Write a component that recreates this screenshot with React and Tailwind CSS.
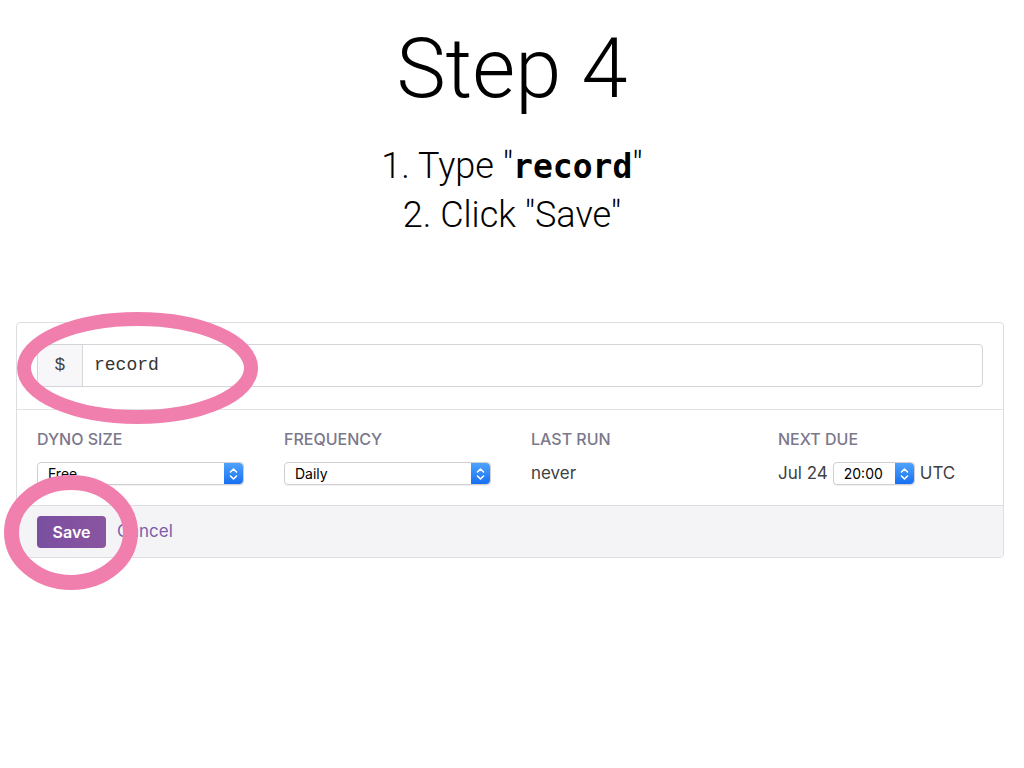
import React from 'react';

const Stepper = () => (
    <div className="h-full w-[19px] rounded-r-[4px] bg-gradient-to-b from-[#4fa3fc] to-[#1670f0] flex items-center justify-center">
        <svg width="9" height="14" viewBox="0 0 9 14" fill="none" stroke="white" strokeWidth="1.6" strokeLinecap="round" strokeLinejoin="round">
            <path d="M1.5 5 L4.5 2 L7.5 5" />
            <path d="M1.5 9 L4.5 12 L7.5 9" />
        </svg>
    </div>
);

const Select = ({ value, width }) => (
    <div className={`${width} h-[23px] flex items-stretch bg-white border border-[#cfcfd3] rounded-[4px] shadow-[0_1px_1px_rgba(0,0,0,0.06)]`}>
        <span className="flex-1 pl-[10px] text-[14px] leading-[21px] text-black">{value}</span>
        <Stepper />
    </div>
);

const Label = ({ children }) => (
    <div className="text-[16px] leading-[18px] font-medium text-[#7b788c]">{children}</div>
);

const App = () => {
    return (
        <div className="relative w-[1024px] h-[768px] bg-white overflow-hidden" style={{ fontFamily: "'Helvetica Neue', Roboto, 'Liberation Sans', sans-serif" }}>
            <h1 className="text-center text-[83px] leading-none font-light text-black pt-[27px]" style={{ fontFamily: "Roboto, 'Liberation Sans', sans-serif" }}>
                Step 4
            </h1>

            <div className="mt-[32px] text-center text-[36px] leading-[48px] font-light text-black" style={{ fontFamily: "Roboto, 'Liberation Sans', sans-serif" }}>
                <div>
                    1. Type "<span className="font-semibold text-[33px]" style={{ fontFamily: "'DejaVu Sans Mono', monospace" }}>record</span>"
                </div>
                <div>2. Click "Save"</div>
            </div>

            <div className="ml-[16px] w-[988px] mt-[83px] border border-[#dedee2] rounded-[4px]" style={{ fontFamily: "Inter, 'Liberation Sans', sans-serif" }}>
                <div className="px-[20px] pt-[21px] pb-[22px] border-b border-[#e3e3e6]">
                    <div className="h-[43px] flex border border-[#d3d3d8] rounded-[4px] overflow-hidden">
                        <div className="w-[45px] bg-[#f7f7f9] border-r border-[#d8d8dc] flex items-center justify-center text-[18px] text-[#444]" style={{ fontFamily: "'Liberation Mono', monospace" }}>
                            $
                        </div>
                        <div className="flex-1 flex items-center pl-[11px] text-[18px] text-[#333]" style={{ fontFamily: "'Liberation Mono', monospace" }}>
                            record
                        </div>
                    </div>
                </div>

                <div className="px-[20px] pt-[20px] pb-[19px] grid grid-cols-[247px_247px_247px_1fr]">
                    <div>
                        <Label>DYNO SIZE</Label>
                        <div className="mt-[14px]"><Select value="Free" width="w-[207px]" /></div>
                    </div>
                    <div>
                        <Label>FREQUENCY</Label>
                        <div className="mt-[14px]"><Select value="Daily" width="w-[207px]" /></div>
                    </div>
                    <div>
                        <Label>LAST RUN</Label>
                        <div className="mt-[13px] text-[17px] leading-[25px] text-[#3f3f44]">never</div>
                    </div>
                    <div>
                        <Label>NEXT DUE</Label>
                        <div className="mt-[13px] flex items-center gap-[5px] text-[17px] leading-[25px] text-[#3f3f44]">
                            <span>Jul 24</span>
                            <Select value="20:00" width="w-[82px]" />
                            <span>UTC</span>
                        </div>
                    </div>
                </div>

                <div className="h-[52px] bg-[#f4f4f6] border-t border-[#dedee2] rounded-b-[4px] px-[20px] flex items-center gap-[11px]">
                    <button className="w-[69px] h-[32px] rounded-[4px] bg-gradient-to-r from-[#7a4fa0] to-[#8a55a0] text-white text-[16px] font-semibold">
                        Save
                    </button>
                    <span className="text-[17px] text-[#7c5cad]">Cancel</span>
                </div>
            </div>

            <svg className="absolute inset-0 pointer-events-none" width="1024" height="768">
                <ellipse cx="137.5" cy="368" rx="113.5" ry="49" fill="none" stroke="#f07fae" strokeWidth="14" />
                <ellipse cx="71" cy="532.5" rx="59.5" ry="50" fill="none" stroke="#f07fae" strokeWidth="15" />
            </svg>
        </div>
    );
};

export default App;
